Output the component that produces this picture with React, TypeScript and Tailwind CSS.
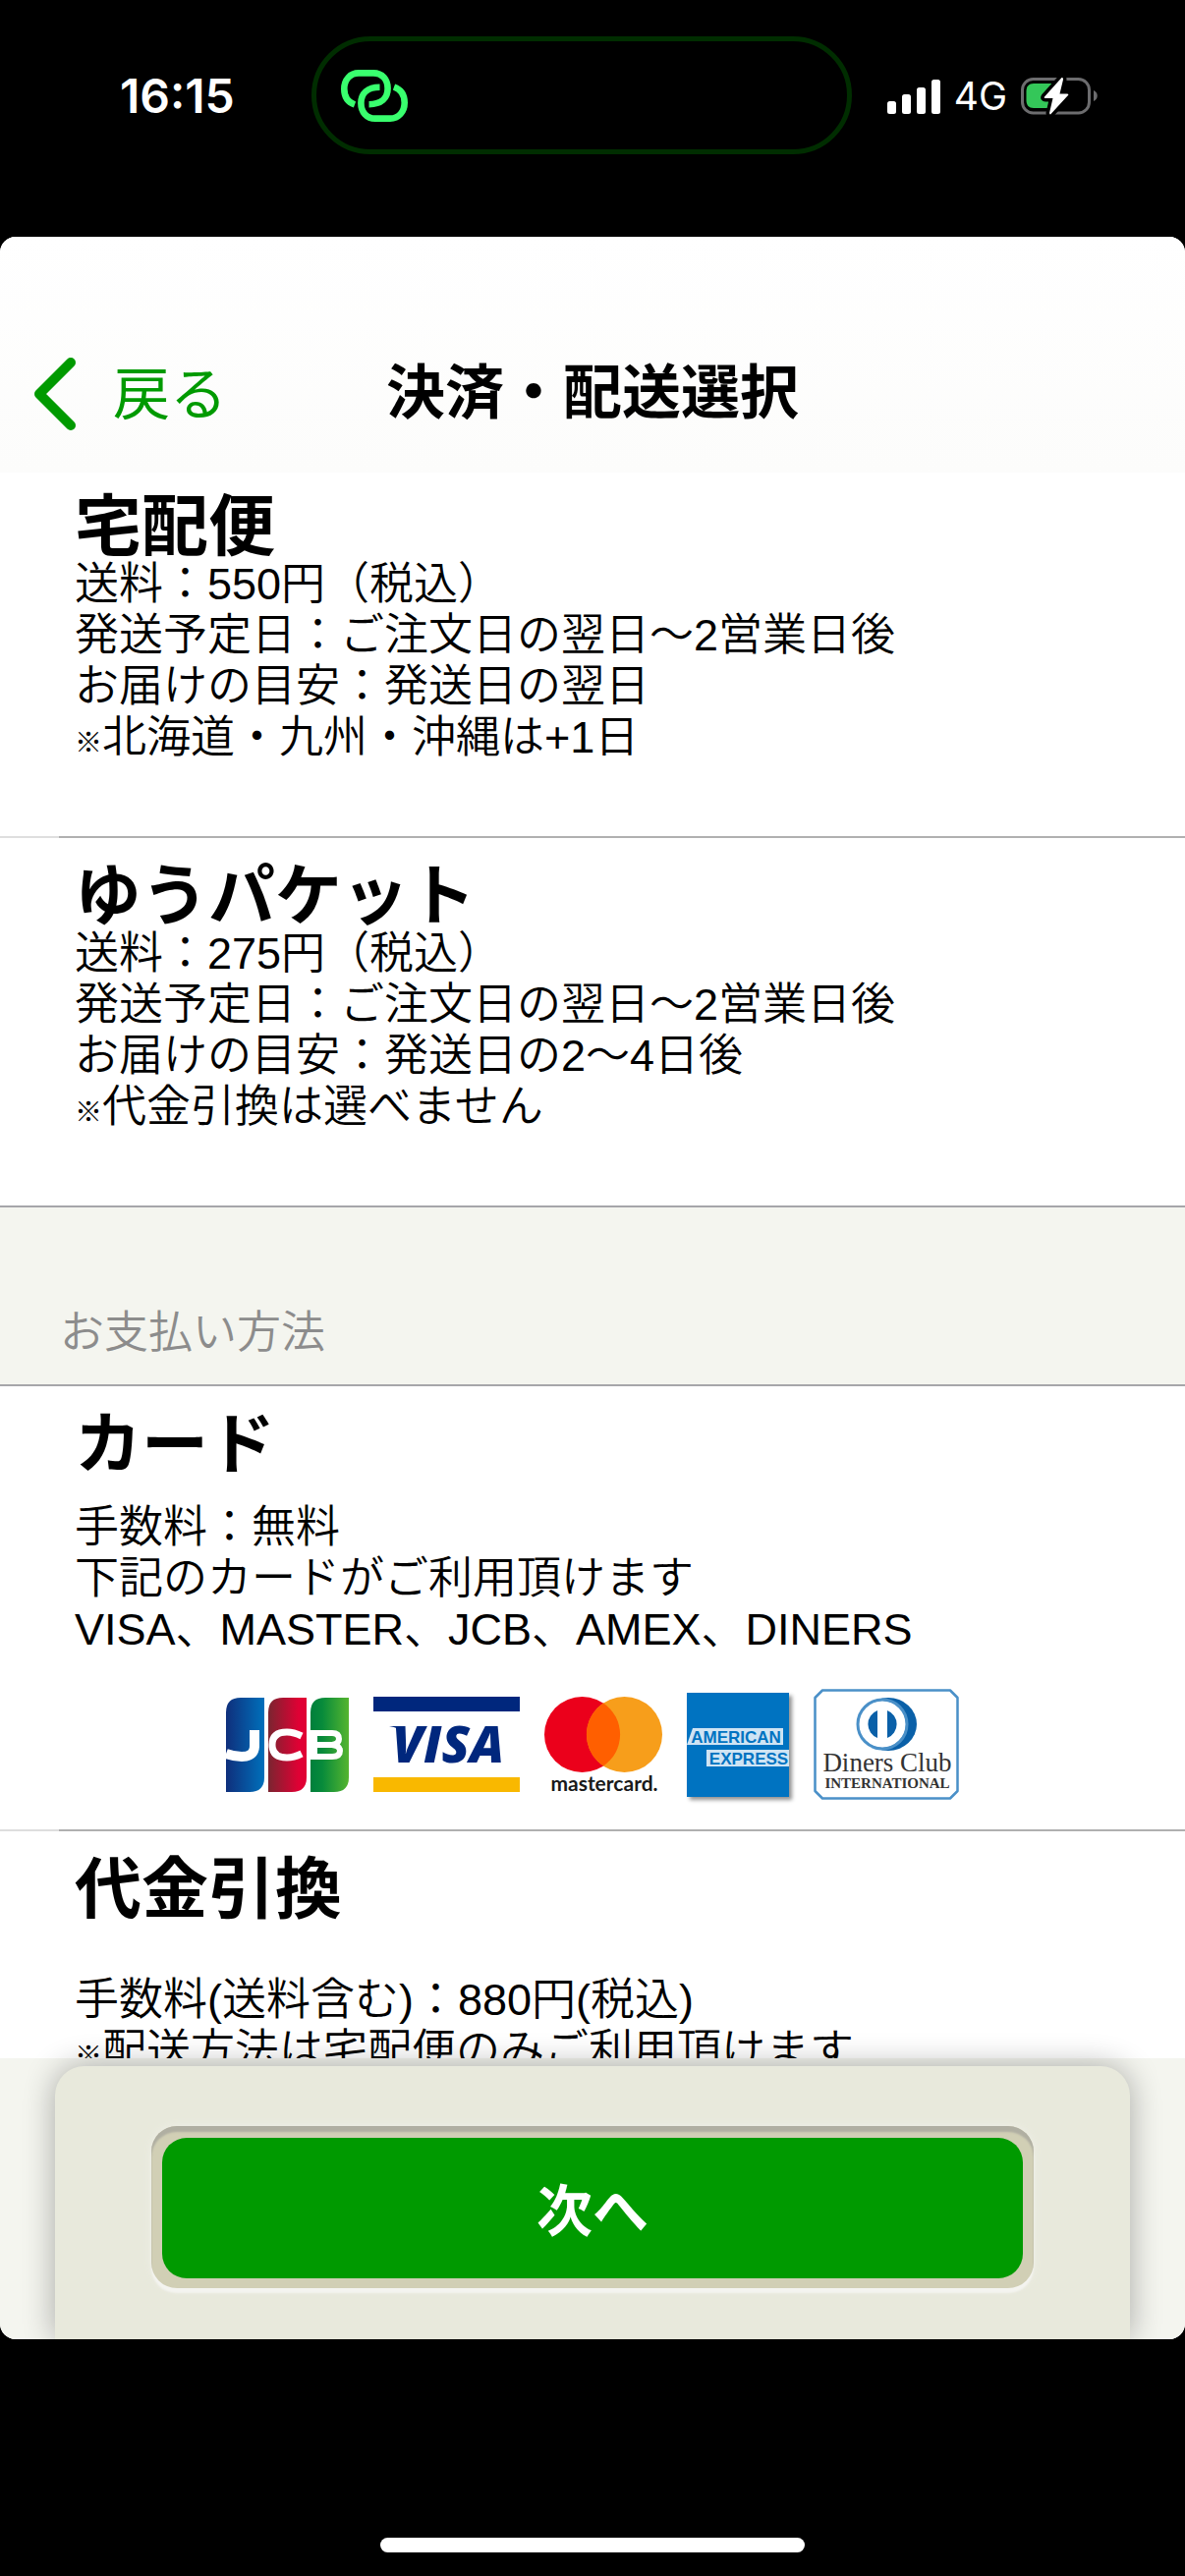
import React from "react";

type Option = {
  title: string;
  lines: string[];
  note?: string;
};

const shippingOptions: Option[] = [
  {
    title: "宅配便",
    lines: [
      "送料：550円（税込）",
      "発送予定日：ご注文日の翌日〜2営業日後",
      "お届けの目安：発送日の翌日",
    ],
    note: "北海道・九州・沖縄は+1日",
  },
  {
    title: "ゆうパケット",
    lines: [
      "送料：275円（税込）",
      "発送予定日：ご注文日の翌日〜2営業日後",
      "お届けの目安：発送日の2〜4日後",
    ],
    note: "代金引換は選べません",
  },
];

const LinkIcon: React.FC = () => (
  <svg
    viewBox="0 0 68 53"
    className="h-[53px] w-[68px]"
    fill="none"
    stroke="#39ff6e"
    strokeWidth="6.6"
    aria-hidden="true"
  >
    <path d="M14 35.5C7 33 3.3 27 3.3 19.5C3.3 10 9.5 3.4 18 3.4H33C42 3.4 47.6 10 47.6 19C47.6 29 41 35.2 28.5 35.2" />
    <path d="M54 17.5C61 20 64.7 26 64.7 33.5C64.7 43 58.5 49.6 50 49.6H35C26 49.6 20.4 43 20.4 34C20.4 24 27 17.8 39.5 17.8" />
  </svg>
);

const SignalIcon: React.FC = () => (
  <svg viewBox="0 0 54 35" className="h-[35px] w-[54px]" fill="#fff" aria-hidden="true">
    <rect x="0" y="22" width="9" height="13" rx="2.5" />
    <rect x="15" y="15" width="9" height="20" rx="2.5" />
    <rect x="30" y="8" width="9" height="27" rx="2.5" />
    <rect x="45" y="0" width="9" height="35" rx="2.5" />
  </svg>
);

const BatteryIcon: React.FC = () => (
  <svg viewBox="0 0 79 38" className="h-[38px] w-[79px]" aria-hidden="true">
    <rect x="1.5" y="1.5" width="68" height="34.5" rx="11" fill="none" stroke="#6c6c6e" strokeWidth="3" />
    <path d="M74 13C79 15 79 22 74 24Z" fill="#6c6c6e" />
    <path d="M13 6H31V31H13C8 31 5.5 28 5.5 23V14C5.5 9 8 6 13 6Z" fill="#34c759" />
    <path
      d="M41.5 0L24 19.5Q23 21 25 21H32.5L29 36Q29.5 38.5 31 36.5L48 18Q49 16.5 47 16.5H39.5L43 2Q43 -0.5 41.5 0Z"
      fill="#fff"
      stroke="#000"
      strokeWidth="7"
      paintOrder="stroke"
    />
  </svg>
);

const JcbLogo: React.FC = () => (
  <svg viewBox="0 0 125 96" className="h-24 w-[125px]" role="img" aria-label="JCB">
    <defs>
      <linearGradient id="jcbBlue">
        <stop offset="0" stopColor="#0f2f7c" />
        <stop offset="1" stopColor="#0070bb" />
      </linearGradient>
      <linearGradient id="jcbRed">
        <stop offset="0" stopColor="#7a2530" />
        <stop offset="0.8" stopColor="#e00034" />
        <stop offset="1" stopColor="#e00034" />
      </linearGradient>
      <linearGradient id="jcbGreen">
        <stop offset="0" stopColor="#007f3c" />
        <stop offset="0.3" stopColor="#078a3b" />
        <stop offset="1" stopColor="#55b52f" />
      </linearGradient>
    </defs>
    <path d="M15 0H39V81Q39 96 24 96H0V15Q0 0 15 0Z" fill="url(#jcbBlue)" />
    <path d="M58 0H82V81Q82 96 67 96H43V15Q43 0 58 0Z" fill="url(#jcbRed)" />
    <path d="M101 0H125V81Q125 96 110 96H86V15Q86 0 101 0Z" fill="url(#jcbGreen)" />
    <g fill="none" stroke="#fff">
      <path d="M29 33V49Q29 60 16 60Q8 60 0 57" strokeWidth="10" />
      <path d="M77 39Q69 35 62 35Q47 35 47 48Q47 61 62 61Q69 61 77 57" strokeWidth="7" />
      <path d="M86 36H108Q115 36 115 42Q115 47 108 48H86M108 48Q116 49 116 54Q116 60 108 60H86" strokeWidth="6" />
      <path d="M89 33V63" strokeWidth="8" />
    </g>
  </svg>
);

const VisaLogo: React.FC = () => (
  <svg viewBox="0 0 149 97" className="h-[97px] w-[149px]" role="img" aria-label="VISA">
    <rect width="149" height="15" fill="#00277d" />
    <rect y="82" width="149" height="15" fill="#f9b800" />
    <path d="M16 30H30L32 38Q26 31 16 30Z" fill="#00277d" />
    <text
      x="76"
      y="67"
      textAnchor="middle"
      className="font-['Open_Sans'] text-[52px] font-extrabold italic"
      fill="#00277d"
    >
      VISA
    </text>
  </svg>
);

const MastercardLogo: React.FC = () => (
  <svg
    viewBox="0 0 120 97"
    className="h-[97px] w-[120px] overflow-visible"
    role="img"
    aria-label="mastercard"
  >
    <circle cx="38.5" cy="38.5" r="38.5" fill="#eb001b" />
    <circle cx="81.5" cy="38.5" r="38.5" fill="#f79e1b" />
    <path d="M60 6.5A38.5 38.5 0 0 1 60 70.5A38.5 38.5 0 0 1 60 6.5Z" fill="#ff5f00" />
    <text
      x="61"
      y="96"
      textAnchor="middle"
      className="font-['Lato'] text-[21px] font-bold"
      fill="#1a1a1a"
    >
      mastercard.
    </text>
  </svg>
);

const AmexLogo: React.FC = () => (
  <svg
    viewBox="0 0 104 106"
    className="h-[106px] w-[104px] shadow-[3px_3px_4px_#00000070]"
    role="img"
    aria-label="AMERICAN EXPRESS"
  >
    <rect width="104" height="106" fill="#0073c1" />
    <path d="M6 36H98V53H0Z" fill="#cfe4f4" />
    <rect x="20" y="58" width="84" height="17" fill="#cfe4f4" />
    <g className="font-['Liberation_Sans'] text-[17px] font-bold" fill="#0073c1">
      <text x="50" y="51" textAnchor="middle">
        AMERICAN
      </text>
      <text x="63" y="73" textAnchor="middle">
        EXPRESS
      </text>
    </g>
  </svg>
);

const DinersLogo: React.FC = () => (
  <svg viewBox="0 0 148 113" className="h-[113px] w-[148px]" role="img" aria-label="Diners Club INTERNATIONAL">
    <path
      d="M9 1.5H139L146.5 9V104L139 111.5H9L1.5 104V9Z"
      fill="#fff"
      stroke="#4a90c8"
      strokeWidth="2.5"
      strokeLinejoin="round"
    />
    <ellipse cx="76" cy="36" rx="29" ry="27" fill="#0a60a8" />
    <circle cx="70" cy="36" r="24" fill="#fff" />
    <circle cx="70" cy="36" r="25" fill="none" stroke="#4a90c8" strokeWidth="3" />
    <path d="M65 22V50A15 15 0 0 1 65 22ZM75 22V50A15 15 0 0 0 75 22Z" fill="#0a60a8" />
    <g fill="#333" className="font-['Liberation_Serif']">
      <text x="75" y="84" textAnchor="middle" className="text-[27px]">
        Diners Club
      </text>
      <text x="75" y="101" textAnchor="middle" className="text-[15px] font-bold">
        INTERNATIONAL
      </text>
    </g>
  </svg>
);

const Note: React.FC<{ children: React.ReactNode }> = ({ children }) => (
  <p>
    <span className="font-['Noto_Sans_CJK_JP'] text-[28px] leading-none font-bold">※</span>
    {children}
  </p>
);

const Divider: React.FC = () => (
  <div className="flex h-[2px]">
    <div className="w-[60px] bg-[#dedede]" />
    <div className="flex-1 bg-[#b0b0b0]" />
  </div>
);

const OptionTitle: React.FC<{ children: React.ReactNode }> = ({ children }) => (
  <h2 className="text-[68px] leading-[66px] font-bold">{children}</h2>
);

const App: React.FC = () => {
  return (
    <div className="flex h-screen flex-col bg-black font-['Liberation_Sans','Noto_Sans_CJK_JP',sans-serif] text-black">
      <header className="flex h-[241px] shrink-0 items-start pt-[37px] pr-[88px] pl-[122px] text-white">
        <div className="flex h-[122px] w-[195px] items-center font-['Inter'] text-[48px] font-semibold">
          16:15
        </div>
        <div className="flex h-[120px] w-[550px] shrink-0 items-center rounded-full border-[5px] border-[#002d00] pl-[25px]">
          <LinkIcon />
        </div>
        <div className="flex h-[122px] flex-1 items-center justify-end gap-[14px]">
          <SignalIcon />
          <span className="font-['Inter'] text-[39px]">4G</span>
          <BatteryIcon />
        </div>
      </header>

      <main className="flex min-h-0 flex-1 flex-col overflow-hidden rounded-[16px] bg-white">
        <nav className="relative z-10 grid h-60 shrink-0 grid-cols-[1fr_auto_1fr] items-center bg-linear-to-b from-white to-[#fcfcfb] px-[35px] pt-20">
          <button className="flex items-center gap-[38px] text-left text-[58px] text-[#009a00]">
            <svg
              viewBox="0 0 42 74"
              className="h-[74px] w-[42px]"
              fill="none"
              stroke="currentColor"
              strokeWidth="10"
              strokeLinecap="round"
              strokeLinejoin="round"
              aria-hidden="true"
            >
              <path d="M37 5L5 37L37 69" />
            </svg>
            戻る
          </button>
          <h1 className="text-[60px] font-bold">決済・配送選択</h1>
        </nav>

        <div className="-mt-1 min-h-0 flex-1 overflow-hidden text-[45px] leading-[52px] font-[350]">
          {shippingOptions.map((option, index) => (
            <React.Fragment key={option.title}>
              {index > 0 && <Divider />}
              <section className="h-[374px] px-[76px] pt-[26px]">
                <OptionTitle>{option.title}</OptionTitle>
                {option.lines.map((line) => (
                  <p key={line}>{line}</p>
                ))}
                {option.note && <Note>{option.note}</Note>}
              </section>
            </React.Fragment>
          ))}

          <div className="flex h-[184px] items-end border-y-2 border-[#a6a6aa] bg-[#f4f5ef] px-[61px] pb-[26px] text-[#8c8c8c]">
            お支払い方法
          </div>

          <section className="px-[76px] pt-[26px] pb-[30px]">
            <OptionTitle>カード</OptionTitle>
            <div className="mt-[26px]">
              <p>手数料：無料</p>
              <p>下記のカードがご利用頂けます</p>
              <p>VISA、MASTER、JCB、AMEX、DINERS</p>
            </div>
            <div className="mt-[34px] flex items-center justify-center gap-[25px]">
              <JcbLogo />
              <VisaLogo />
              <MastercardLogo />
              <AmexLogo />
              <DinersLogo />
            </div>
          </section>
          <Divider />

          <section className="px-[76px] pt-[26px]">
            <OptionTitle>代金引換</OptionTitle>
            <div className="mt-[54px]">
              <p>手数料(送料含む)：880円(税込)</p>
              <Note>配送方法は宅配便のみご利用頂けます</Note>
            </div>
          </section>
        </div>

        <footer className="relative z-10 shrink-0 px-14 pt-2">
          <div className="absolute inset-0 -z-10 bg-[#f4f5ef]" />
          <div className="rounded-t-[30px] bg-[#e8e9dc] px-[98px] pt-[61px] pb-[52px] shadow-[0_0_32px_#00000050]">
            <div className="rounded-[26px] bg-[#d1cfb5] px-[11px] pt-3 pb-[10px] shadow-[inset_0_6px_2px_#b0afa2,0_5px_2px_#f4f4f0,0_0_8px_#efefe8]">
              <button className="h-[143px] w-full rounded-[25px] bg-[#009a00] pt-2 text-[57px] font-bold text-white">
                次へ
              </button>
            </div>
          </div>
        </footer>
      </main>

      <div className="flex h-[241px] shrink-0 items-end justify-center pb-6">
        <div className="h-[15px] w-[432px] rounded-full bg-white" />
      </div>
    </div>
  );
};

export default App;
